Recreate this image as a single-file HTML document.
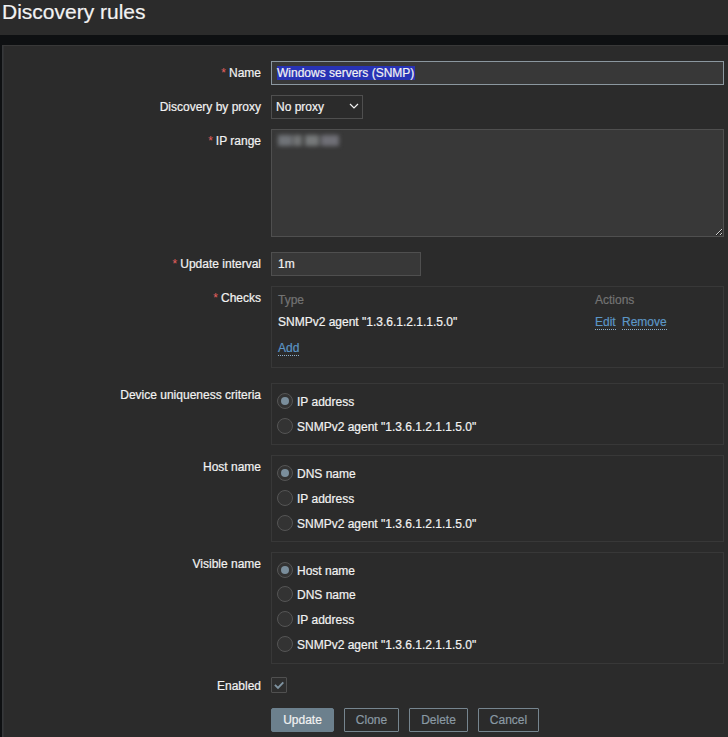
<!DOCTYPE html>
<html><head><meta charset="utf-8">
<style>
*{box-sizing:border-box;margin:0;padding:0}
body{-webkit-text-stroke:0.2px currentColor}html,body{width:728px;height:737px;overflow:hidden;background:#2b2b2b;font-family:"Liberation Sans",sans-serif;font-size:12px;color:#f2f2f2}
.abs{position:absolute}
.title{left:2px;top:-2px;font-size:21px;line-height:28px;color:#f2f2f2}
.strip{left:0;top:35px;width:728px;height:702px;background:#0e1012}
.panel{left:2px;top:45px;width:726px;height:692px;background:#2b2b2b;border-left:1px solid #36383a;border-top:1px solid #383838;box-shadow:inset 1px 0 0 #313234}
.lbl{right:467px;text-align:right;white-space:nowrap;line-height:14px}
.req::before{content:"*";color:#e8605f;margin-right:3px;-webkit-text-stroke:0}
.inp{left:271px;height:24px;background:#383838;border:1px solid #4f4f4f}
.txt{position:absolute;left:6px;top:4px;line-height:14px;white-space:nowrap}
.box{left:271px;width:453px;border:1px solid #383838}
.radio{position:absolute;left:5px;width:16px;height:16px;border-radius:50%;background:#333;border:1px solid #555}
.radio.on::after{content:"";position:absolute;left:3px;top:3px;width:8px;height:8px;border-radius:50%;background:#7a8e9c}
.rt{position:absolute;left:25px;line-height:14px;white-space:nowrap}
.link{color:#5c96c6;border-bottom:1px dotted #8fb0cc}
.btn{top:708px;height:24px;border:1px solid #76858f;border-radius:1px;color:#8a99a3;text-align:center;line-height:22px}
</style></head><body>
<div class="abs title">Discovery rules</div>
<div class="abs strip"></div>
<div class="abs panel"></div>

<div class="abs lbl req" style="top:66px">Name</div>
<div class="abs inp" style="top:61px;width:453px;border-color:#8b979f"><span class="txt" style="left:5px;padding-right:1px;background:#2833b5">Windows servers (SNMP)</span></div>

<div class="abs lbl" style="top:100px">Discovery by proxy</div>
<div class="abs inp" style="top:95px;width:92px;background:#2b2b2b"><span class="txt" style="left:4px">No proxy</span>
<svg class="abs" style="left:77px;top:7px" width="10" height="6" viewBox="0 0 10 6"><path d="M1 1 L5 5 L9 1" fill="none" stroke="#f2f2f2" stroke-width="1.2"/></svg></div>

<div class="abs lbl req" style="top:134px">IP range</div>
<div class="abs inp" style="top:129px;width:453px;height:108px"><div class="abs" style="left:0;top:0;width:80px;height:30px;filter:blur(2px)">
<div class="abs" style="left:6px;top:5px;width:14px;height:11px;background:#707378"></div>
<div class="abs" style="left:21px;top:5px;width:9px;height:11px;background:#717374"></div>
<div class="abs" style="left:33px;top:5px;width:14px;height:11px;background:#76797a"></div>
<div class="abs" style="left:49px;top:5px;width:18px;height:11px;background:#6f6f76"></div>
</div>
<svg class="abs" style="right:0;bottom:0" width="8" height="8" viewBox="0 0 8 8"><path d="M1.5 7.5 L7.5 1.5 M5.5 7.5 L7.5 5.5" stroke="#151515" stroke-width="1"/><path d="M1 7 L7 1 M5 7 L7 5" stroke="#d0d0d0" stroke-width="1"/></svg></div>

<div class="abs lbl req" style="top:257px">Update interval</div>
<div class="abs inp" style="top:252px;width:150px"><span class="txt">1m</span></div>

<div class="abs lbl req" style="top:291px">Checks</div>
<div class="abs box" style="top:286px;height:82px">
  <span class="txt" style="top:6px;color:#737373">Type</span>
  <span class="txt" style="top:6px;left:323px;color:#737373">Actions</span>
  <span class="txt" style="top:28px">SNMPv2 agent "1.3.6.1.2.1.1.5.0"</span>
  <span class="txt" style="top:28px;left:323px"><span class="link">Edit</span></span><span class="txt" style="top:28px;left:350px"><span class="link">Remove</span></span>
  <span class="txt" style="top:54px"><span class="link">Add</span></span>
</div>

<div class="abs lbl" style="top:388px">Device uniqueness criteria</div>
<div class="abs box" style="top:383px;height:62px">
  <span class="radio on" style="top:9px"></span><span class="rt" style="top:11px">IP address</span>
  <span class="radio" style="top:34px"></span><span class="rt" style="top:36px">SNMPv2 agent "1.3.6.1.2.1.1.5.0"</span>
</div>

<div class="abs lbl" style="top:460px">Host name</div>
<div class="abs box" style="top:455px;height:87px">
  <span class="radio on" style="top:9px"></span><span class="rt" style="top:11px">DNS name</span>
  <span class="radio" style="top:34px"></span><span class="rt" style="top:36px">IP address</span>
  <span class="radio" style="top:59px"></span><span class="rt" style="top:61px">SNMPv2 agent "1.3.6.1.2.1.1.5.0"</span>
</div>

<div class="abs lbl" style="top:557px">Visible name</div>
<div class="abs box" style="top:552px;height:112px">
  <span class="radio on" style="top:9px"></span><span class="rt" style="top:11px">Host name</span>
  <span class="radio" style="top:33px"></span><span class="rt" style="top:35px">DNS name</span>
  <span class="radio" style="top:58px"></span><span class="rt" style="top:60px">IP address</span>
  <span class="radio" style="top:83px"></span><span class="rt" style="top:85px">SNMPv2 agent "1.3.6.1.2.1.1.5.0"</span>
</div>

<div class="abs lbl" style="top:679px">Enabled</div>
<div class="abs" style="left:271px;top:677px;width:16px;height:16px;background:#2e2e2e;border:1px solid #505050;border-radius:1px">
<svg class="abs" style="left:2px;top:3px" width="11" height="9" viewBox="0 0 11 9"><path d="M0.9 3.9 L4 7 L9.3 1.4" fill="none" stroke="#7f93a0" stroke-width="1.9"/></svg></div>

<div class="abs btn" style="left:271px;width:63px;background:#6c808d;border-color:#6c808d;border-radius:2px;color:#f2f2f2">Update</div>
<div class="abs btn" style="left:344px;width:55px">Clone</div>
<div class="abs btn" style="left:409px;width:59px">Delete</div>
<div class="abs btn" style="left:478px;width:61px">Cancel</div>
</body></html>
